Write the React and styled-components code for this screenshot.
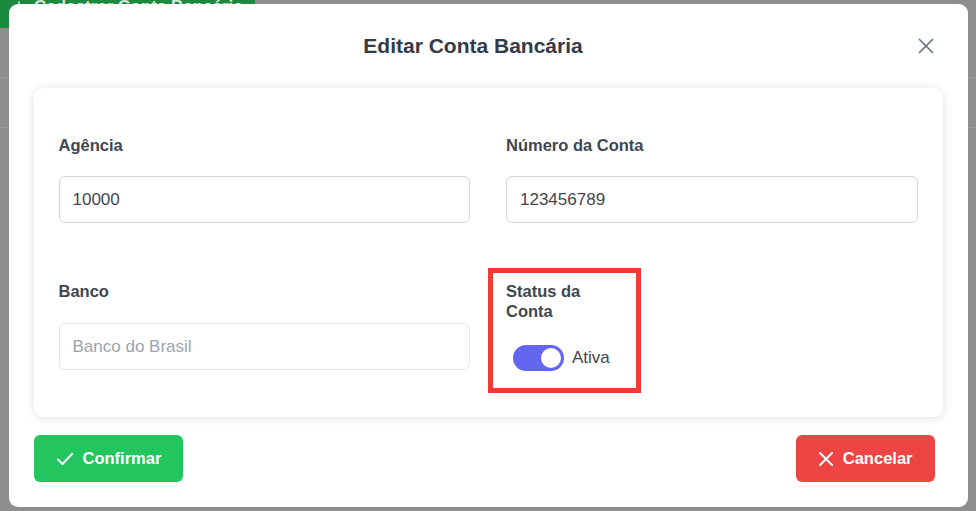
import React from "react";
import styled, { createGlobalStyle } from "styled-components";
import { X, Plus } from "lucide-react";

const GlobalStyle = createGlobalStyle`
  html, body { margin: 0; padding: 0; }
  body {
    font-family: "Liberation Sans", Arial, sans-serif;
    background: #8e8e8e;
    overflow: hidden;
  }
  * { box-sizing: border-box; }
`;

const Page = styled.div`
  width: 976px;
  height: 511px;
  position: relative;
  background: #8e8e8e;
`;

const PageButton = styled.button`
  display: flex;
  align-items: center;
  gap: 6px;
  height: 42px;
  width: 255px;
  margin-top: -14px;
  padding: 0 10px;
  border: none;
  border-radius: 0 0 4px 0;
  background: #1b8a3e;
  color: #d6e6da;
  font-family: inherit;
  font-size: 17px;
  font-weight: 700;
`;

const PageRow = styled.div`
  height: 50px;
  border-bottom: 1px solid #9b9b9b;
`;

const Overlay = styled.div`
  position: fixed;
  inset: 0;
  display: flex;
  align-items: center;
  justify-content: center;
`;

const Modal = styled.div`
  width: 959px;
  height: 503px;
  background: #fff;
  border-radius: 9px;
  display: flex;
  flex-direction: column;
  padding: 0 25px 25px;
`;

const Header = styled.div`
  height: 84px;
  display: flex;
  align-items: center;
`;

const Title = styled.h2`
  flex: 1;
  margin: 0;
  text-align: center;
  font-size: 21px;
  font-weight: 700;
  color: #343b47;
`;

const CloseButton = styled.button`
  background: none;
  border: none;
  padding: 0;
  margin-right: 4px;
  color: #6b7280;
  display: flex;
  cursor: pointer;
`;

const Card = styled.div`
  background: #fff;
  border-radius: 9px;
  box-shadow: 0 1px 10px rgba(0, 0, 0, 0.13);
  padding: 47px 25px 24px;
`;

const Grid = styled.div`
  display: grid;
  grid-template-columns: 1fr 1fr;
  column-gap: 36px;
  row-gap: 45px;
  align-items: start;
`;

const Field = styled.div`
  display: flex;
  flex-direction: column;
  padding-top: ${(p) => p.$offset || 0}px;
`;

const Label = styled.label`
  font-size: 16.5px;
  font-weight: 700;
  line-height: 20px;
  color: #3f4652;
  margin-bottom: ${(p) => p.$gap || 21}px;
`;

const Input = styled.input`
  height: 47px;
  border: 1px solid ${(p) => (p.disabled ? "#e5e7eb" : "#d1d5db")};
  border-radius: 6px;
  padding: 0 13px;
  font-family: inherit;
  font-size: 17px;
  color: #3f4652;
  background: #fff;
  outline: none;
  &::placeholder { color: #9ca3af; }
`;

const StatusBox = styled.div`
  width: 153px;
  margin-left: -18px;
  border: 5px solid #ef3b36;
  padding: 8px 13px 17px;
  display: flex;
  flex-direction: column;
`;

const StatusLabel = styled(Label)`
  width: 100px;
  margin-bottom: 24px;
`;

const ToggleRow = styled.div`
  display: flex;
  align-items: center;
  gap: 8px;
  margin-left: 7px;
  font-size: 17px;
  color: #3f4652;
`;

const Toggle = styled.span`
  width: 51px;
  height: 26px;
  border-radius: 13px;
  background: ${(p) => (p.$on ? "#6366f1" : "#d1d5db")};
  position: relative;
  flex-shrink: 0;
  &::after {
    content: "";
    position: absolute;
    top: 3px;
    left: ${(p) => (p.$on ? "28px" : "3px")};
    width: 20px;
    height: 20px;
    border-radius: 50%;
    background: #fff;
  }
`;

const Footer = styled.div`
  display: flex;
  justify-content: space-between;
  margin-top: 18px;
  padding-right: 8px;
`;

const ActionButton = styled.button`
  height: 47px;
  display: flex;
  align-items: center;
  gap: 10px;
  padding: 0 22px 0 23px;
  border: none;
  border-radius: 6px;
  background: ${(p) => p.$bg};
  color: #fff;
  font-family: inherit;
  font-size: 16.5px;
  font-weight: 700;
  cursor: pointer;
`;

const CheckIcon = () => (
  <svg width="16" height="12" viewBox="0 0 16 12" fill="none" stroke="currentColor" strokeWidth="2" strokeLinecap="round" strokeLinejoin="round">
    <polyline points="1,6.5 5.5,11 15,1" />
  </svg>
);

const CrossIcon = () => (
  <svg width="14" height="14" viewBox="0 0 14 14" fill="none" stroke="currentColor" strokeWidth="2" strokeLinecap="round">
    <path d="M1 1l12 12M13 1L1 13" />
  </svg>
);

export default function App() {
  return (
    <>
      <GlobalStyle />
      <Page>
        <PageButton>
          <Plus size={18} />
          Cadastrar Conta Bancária
        </PageButton>
        <PageRow />
        <PageRow />
        <Overlay>
          <Modal>
            <Header>
              <Title>Editar Conta Bancária</Title>
              <CloseButton aria-label="Fechar">
                <X size={26} strokeWidth={1.6} />
              </CloseButton>
            </Header>
            <Card>
              <Grid>
                <Field>
                  <Label>Agência</Label>
                  <Input defaultValue="10000" />
                </Field>
                <Field>
                  <Label>Número da Conta</Label>
                  <Input defaultValue="123456789" />
                </Field>
                <Field $offset={13}>
                  <Label $gap={22}>Banco</Label>
                  <Input disabled placeholder="Banco do Brasil" />
                </Field>
                <StatusBox>
                  <StatusLabel>Status da Conta</StatusLabel>
                  <ToggleRow>
                    <Toggle $on />
                    Ativa
                  </ToggleRow>
                </StatusBox>
              </Grid>
            </Card>
            <Footer>
              <ActionButton $bg="#22c55e">
                <CheckIcon />
                Confirmar
              </ActionButton>
              <ActionButton $bg="#ef4444">
                <CrossIcon />
                Cancelar
              </ActionButton>
            </Footer>
          </Modal>
        </Overlay>
      </Page>
    </>
  );
}
